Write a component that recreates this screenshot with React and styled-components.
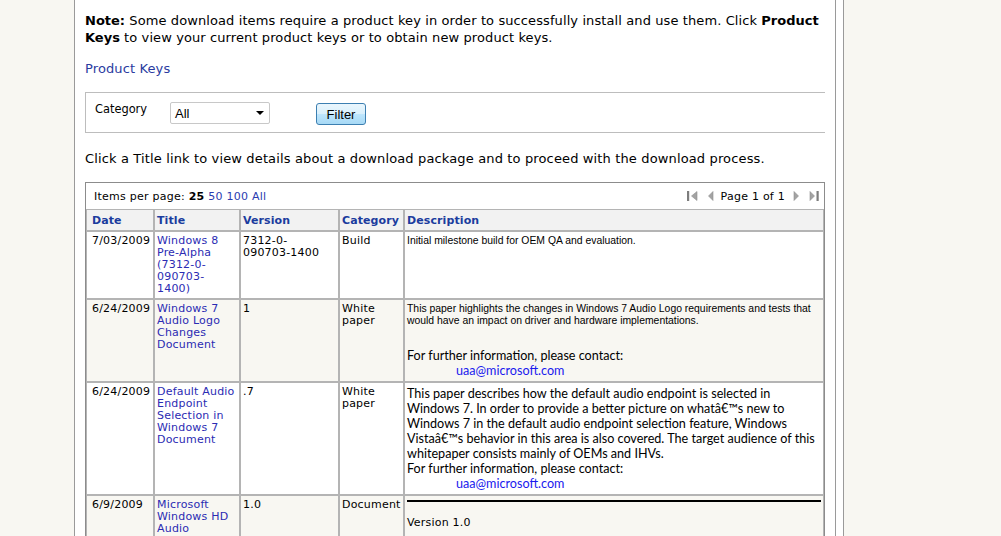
import React from 'react';
import styled, { createGlobalStyle } from 'styled-components';

const GlobalStyle = createGlobalStyle`
  html, body {
    margin: 0;
    padding: 0;
    background: #f8f7f2;
  }
  body {
    font-family: "DejaVu Sans", Verdana, sans-serif;
    color: #000;
  }
`;

const Page = styled.div`
  display: flex;
  min-height: 536px;
  padding-left: 74px;
`;

const Main = styled.div`
  width: 740px;
  background: #fff;
  border-left: 1px solid #9a9a9a;
  border-right: 1px solid #9a9a9a;
  padding: 12px 10px 0 10px;
`;

const Gutter = styled.div`
  width: 7px;
  background: #fff;
  border-right: 1px solid #9a9a9a;
`;

const Note = styled.p`
  margin: 0;
  font-size: 13px;
  line-height: 17px;
  letter-spacing: 0.1px;

  b {
    letter-spacing: 0;
  }
`;

const Link = styled.a`
  color: ${p => p.$tone || '#2a3b9f'};
  text-decoration: none;
  cursor: pointer;
`;

const KeysLink = styled(Link)`
  display: block;
  font-size: 13px;
  line-height: 17px;
  letter-spacing: 0.12px;
  margin-top: 14px;
`;

const FilterBox = styled.div`
  display: flex;
  align-items: flex-start;
  height: 41px;
  margin-top: 15px;
  border: 1px solid #bdbdbd;
  border-right: none;
  padding: 8px 0 0 9px;
  box-sizing: border-box;
`;

const Label = styled.span`
  font-size: 11.4px;
  width: 75px;
  line-height: 15px;
  margin-top: 1px;
`;

const Select = styled.div`
  width: 100px;
  height: 22px;
  margin-top: 1px;
  border: 1px solid #c8c8c8;
  border-radius: 2px;
  display: flex;
  align-items: center;
  justify-content: space-between;
  padding: 0 4px;
  font-family: "Liberation Sans", Arial, sans-serif;
  font-size: 13px;
  box-sizing: border-box;
`;

const Caret = styled.span`
  width: 0;
  height: 0;
  border-left: 4px solid transparent;
  border-right: 4px solid transparent;
  border-top: 4px solid #000;
  margin-right: 1px;
`;

const Button = styled.button`
  margin-left: 46px;
  margin-top: 2px;
  width: 50px;
  height: 22px;
  padding: 0;
  font-family: "Liberation Sans", Arial, sans-serif;
  font-size: 13px;
  color: #000;
  border: 1px solid #3c7fb1;
  border-radius: 3px;
  background: linear-gradient(#eaf6fd 0%, #d9f0fc 50%, #bee6fd 51%, #a7d9f5 100%);
`;

const Intro = styled.p`
  margin: 17px 0 0 0;
  font-size: 13px;
  line-height: 17px;
  letter-spacing: 0.14px;
`;

const Grid = styled.div`
  margin-top: 15px;
  border: 1px solid #8c8c8c;
`;

const Pager = styled.div`
  display: flex;
  justify-content: space-between;
  align-items: center;
  height: 26px;
  padding: 0 5px 0 8px;
  font-size: 11px;
  letter-spacing: 0.25px;
`;

const PagerNav = styled.div`
  display: flex;
  align-items: center;
  gap: 7px;
`;

const Table = styled.table`
  width: 100%;
  border-collapse: separate;
  border-spacing: 0;
  table-layout: fixed;
  font-size: 11px;
  letter-spacing: 0.2px;
`;

const Th = styled.th`
  text-align: left;
  font-weight: bold;
  color: #1b3c9e;
  background: #f2f2f2;
  border: 1px solid #b4b4b4;
  padding: 4px 2px 3px 2px;
  line-height: 13px;
  letter-spacing: 0.1px;

  &:first-child {
    padding-left: 5px;
  }
`;

const Td = styled.td`
  vertical-align: top;
  border: 1px solid #b4b4b4;
  padding: 3px 2px 3px 2px;
  line-height: 12px;
  background: ${p => (p.$alt ? '#f8f7f2' : '#fff')};
  white-space: pre-line;

  &:first-child {
    padding-left: 5px;
  }
`;

const Small = styled.div`
  font-family: "Liberation Sans", Arial, sans-serif;
  font-size: 10.4px;
  line-height: 12px;
  letter-spacing: 0;
`;

const Body = styled.div`
  font-family: Lato, "Open Sans", sans-serif;
  font-size: 12.6px;
  line-height: 15px;
  letter-spacing: 0;
  margin-top: ${p => p.$gap || 0}px;
`;

const Mail = styled(Link)`
  display: block;
  padding-left: 49px;
`;

const Rule = styled.hr`
  border: none;
  border-top: 2px solid #000;
  margin: 1px 0 15px 0;
`;

function NavIcon({ dir, bar }) {
  const w = bar ? 11 : 9;
  let tri;
  if (dir === 'left') tri = bar ? 'M10 1.5 L10 10.5 L4.5 6 Z' : 'M8 1.5 L8 10.5 L3.5 6 Z';
  else tri = 'M2 1.5 L2 10.5 L6.5 6 Z';
  const barX = dir === 'left' ? 0 : 8.5;
  return (
    <svg width={w} height="12" viewBox={`0 0 ${w} 12`}>
      {bar && <rect x={barX} y="1" width="2.2" height="10" fill="#7d7d7d" />}
      <path d={tri} fill="#a3a3a3" stroke="#8f8f8f" strokeWidth="0.6" />
    </svg>
  );
}

const cols = [68, 86, 99, 65, null];

const rows = [
  {
    date: '7/03/2009',
    title: 'Windows 8 Pre-Alpha (7312-0-090703-1400)',
    version: '7312-0-\n090703-1400',
    category: 'Build',
    desc: <Small>Initial milestone build for OEM QA and evaluation.</Small>,
  },
  {
    date: '6/24/2009',
    title: 'Windows 7 Audio Logo Changes Document',
    version: '1',
    category: 'White paper',
    desc: (
      <>
        <Small>This paper highlights the changes in Windows 7 Audio Logo requirements and tests that would have an impact on driver and hardware implementations.</Small>
        <Body $gap={21}>For further information, please contact:</Body>
        <Body><Mail $tone="#1a1aee">uaa@microsoft.com</Mail></Body>
      </>
    ),
  },
  {
    date: '6/24/2009',
    title: 'Default Audio Endpoint Selection in Windows 7 Document',
    version: '.7',
    category: 'White paper',
    desc: (
      <>
        <Body>This paper describes how the default audio endpoint is selected in Windows 7. In order to provide a better picture on whatâ€™s new to Windows 7 in the default audio endpoint selection feature, Windows Vistaâ€™s behavior in this area is also covered. The target audience of this whitepaper consists mainly of OEMs and IHVs.</Body>
        <Body>For further information, please contact:</Body>
        <Body><Mail $tone="#1a1aee">uaa@microsoft.com</Mail></Body>
      </>
    ),
  },
  {
    date: '6/9/2009',
    title: 'Microsoft Windows HD Audio',
    version: '1.0',
    category: 'Document',
    desc: (
      <>
        <Rule />
        <div>Version 1.0</div>
      </>
    ),
  },
];

export default function App() {
  return (
    <>
      <GlobalStyle />
      <Page>
        <Main>
          <Note>
            <b>Note:</b> Some download items require a product key in order to successfully install and use them. Click <b>Product Keys</b> to view your current product keys or to obtain new product keys.
          </Note>
          <KeysLink>Product Keys</KeysLink>
          <FilterBox>
            <Label>Category</Label>
            <Select>
              <span>All</span>
              <Caret />
            </Select>
            <Button>Filter</Button>
          </FilterBox>
          <Intro>Click a Title link to view details about a download package and to proceed with the download process.</Intro>
          <Grid>
            <Pager>
              <span>
                Items per page: <b>25</b> <Link $tone="#2a3bb0">50</Link> <Link $tone="#2a3bb0">100</Link> <Link $tone="#2a3bb0">All</Link>
              </span>
              <PagerNav>
                <NavIcon dir="left" bar />
                <NavIcon dir="left" />
                <span>Page 1 of 1</span>
                <NavIcon dir="right" />
                <NavIcon dir="right" bar />
              </PagerNav>
            </Pager>
            <Table>
              <colgroup>
                {cols.map((w, i) => (
                  <col key={i} style={w ? { width: w } : undefined} />
                ))}
              </colgroup>
              <thead>
                <tr>
                  <Th>Date</Th>
                  <Th>Title</Th>
                  <Th>Version</Th>
                  <Th>Category</Th>
                  <Th>Description</Th>
                </tr>
              </thead>
              <tbody>
                {rows.map((r, i) => (
                  <tr key={i}>
                    <Td $alt={i % 2 === 1}>{r.date}</Td>
                    <Td $alt={i % 2 === 1}><Link $tone="#2b2bb3">{r.title}</Link></Td>
                    <Td $alt={i % 2 === 1}>{r.version}</Td>
                    <Td $alt={i % 2 === 1}>{r.category}</Td>
                    <Td $alt={i % 2 === 1}>{r.desc}</Td>
                  </tr>
                ))}
              </tbody>
            </Table>
          </Grid>
        </Main>
        <Gutter />
      </Page>
    </>
  );
}
